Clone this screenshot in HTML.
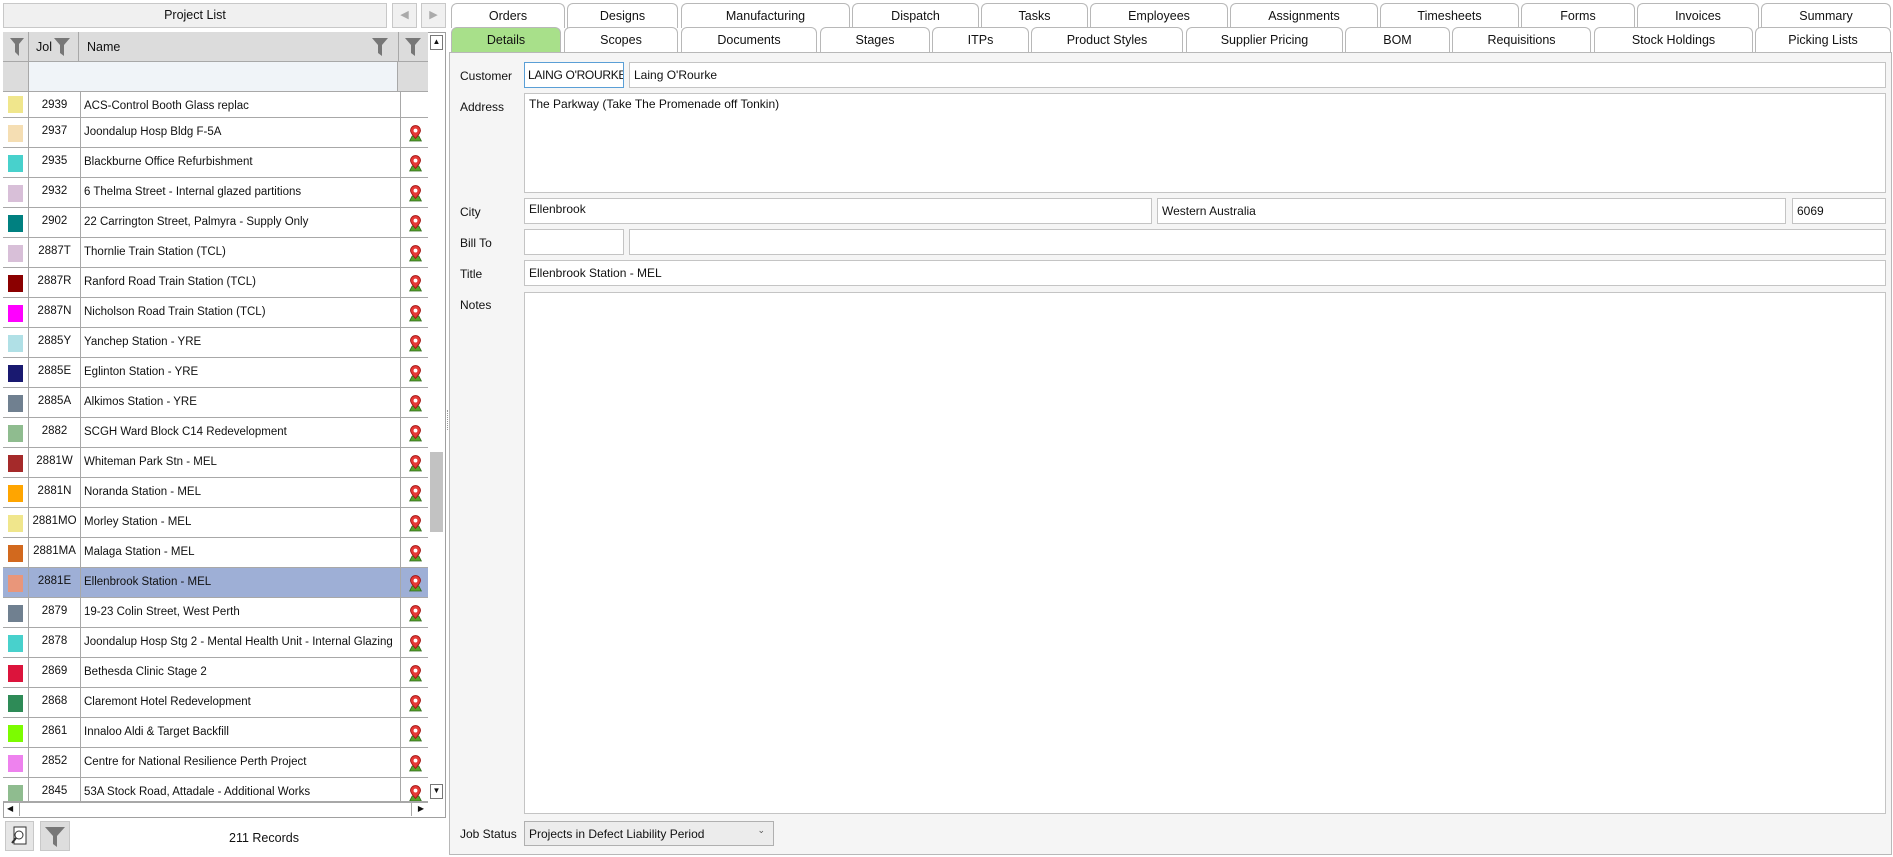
<!DOCTYPE html><html><head><meta charset="utf-8"><style>
*{box-sizing:border-box;margin:0;padding:0}
body{width:1893px;height:857px;background:#fff;font-family:"Liberation Sans",sans-serif;font-size:12px;color:#111;position:relative;overflow:hidden}
.a{position:absolute}
.btn{background:#f0f0f0;border:1px solid #c8c8c8}
.tab{position:absolute;height:25px;border:1px solid #b8b8b8;border-bottom:none;border-radius:6px 6px 0 0;background:#fff;text-align:center;line-height:24px;font-size:12.5px}
.fld{position:absolute;background:#fff;border:1px solid #c4c4c4;padding:3px 4px;font-size:12px}
.lbl{position:absolute;left:460px;font-size:12px}
.row{position:absolute;left:3px;width:425px;height:30px;border-bottom:1px solid #a8a8a8;background:#fff;font-size:11.5px}
.row .sw{position:absolute;left:5px;top:7px;width:15px;height:17px}
.row .j{position:absolute;left:25px;width:53px;top:0;height:29px;line-height:27px;text-align:center;border-left:1px solid #a8a8a8;border-right:1px solid #a8a8a8;overflow:hidden;white-space:nowrap}
.row .n{position:absolute;left:78px;width:320px;top:0;height:29px;line-height:29px;padding-left:3px;border-right:1px solid #a8a8a8;overflow:hidden;white-space:nowrap}
.row svg{position:absolute;left:405px;top:7px}
.sel{background:#9eafd6}
</style></head><body>
<div class="a btn" style="left:3px;top:3px;width:384px;height:25px;text-align:center;line-height:23px;font-size:12.5px">Project List</div>
<div class="a btn" style="left:392px;top:3px;width:25px;height:25px;color:#aaa;text-align:center;line-height:23px;font-size:11px">◀</div>
<div class="a btn" style="left:421px;top:3px;width:25px;height:25px;color:#aaa;text-align:center;line-height:23px;font-size:11px">▶</div>
<div class="a" style="left:3px;top:32px;width:443px;height:786px;border:1px solid #a0a0a0;background:#fff"></div>
<div class="a" style="left:3px;top:32px;width:425px;height:30px;background:#dcdcdc;border-bottom:1px solid #a8a8a8"></div>
<div class="a" style="left:3px;top:62px;width:425px;height:30px;background:#dcdcdc;border-bottom:1px solid #a8a8a8"></div>
<div class="a" style="left:28px;top:62px;width:370px;height:29px;background:#f0f4f8;border-left:1px solid #a8a8a8;border-right:1px solid #a8a8a8"></div>
<div class="a" style="left:28px;top:32px;width:1px;height:30px;background:#a8a8a8"></div>
<div class="a" style="left:78px;top:32px;width:1px;height:30px;background:#a8a8a8"></div>
<div class="a" style="left:398px;top:32px;width:1px;height:30px;background:#a8a8a8"></div>
<div class="a" style="left:36px;top:40px;font-size:12.5px">Jol</div>
<div class="a" style="left:87px;top:40px;font-size:12.5px">Name</div>
<svg class="a" style="left:10px;top:38px" width="14" height="18"><path d="M0 0H14L9 6V18L5 14V6Z" fill="#777"/></svg>
<svg class="a" style="left:54px;top:38px" width="16" height="18"><path d="M0 0H16L10 7V18L6 15V7Z" fill="#777"/></svg>
<svg class="a" style="left:372px;top:38px" width="16" height="18"><path d="M0 0H16L10 7V18L6 15V7Z" fill="#777"/></svg>
<svg class="a" style="left:405px;top:38px" width="16" height="18"><path d="M0 0H16L10 7V18L6 15V7Z" fill="#777"/></svg>
<div id="rows"></div>
<div class="a" style="left:428px;top:33px;width:17px;height:769px;background:#fff"></div>
<div class="a" style="left:430px;top:35px;width:13px;height:15px;border:1px solid #777;font-size:8px;text-align:center;line-height:12px">▲</div>
<div class="a" style="left:430px;top:452px;width:13px;height:80px;background:#c2c2c2"></div>
<div class="a" style="left:430px;top:784px;width:13px;height:15px;border:1px solid #777;font-size:8px;text-align:center;line-height:12px">▼</div>
<div class="a" style="left:4px;top:802px;width:424px;height:14px;background:#fff;border-top:1px solid #a8a8a8"></div>
<div class="a" style="left:7px;top:802px;width:13px;height:14px;border-right:1px solid #a8a8a8;font-size:8px;line-height:14px">◀</div>
<div class="a" style="left:411px;top:802px;width:13px;height:14px;border-left:1px solid #a8a8a8;font-size:8px;line-height:14px;text-align:right">▶</div>
<div class="a btn" style="left:5px;top:821px;width:29px;height:30px;background:#e6e6e6"><svg width="27" height="28"><rect x="8" y="5" width="12" height="17" fill="#fff" stroke="#333"/><circle cx="13" cy="13" r="4" fill="none" stroke="#333"/><path d="M10 16L6 21" stroke="#333" stroke-width="2"/></svg></div>
<div class="a btn" style="left:40px;top:821px;width:30px;height:30px;background:#ddd"><svg width="28" height="28"><path d="M4 5H24L16 14V25L12 22V14Z" fill="#777"/></svg></div>
<div class="a" style="left:229px;top:831px;font-size:12.5px">211 Records</div>
<div class="a" style="left:447px;top:410px;width:2px;height:20px;border-left:1px dotted #999"></div>
<div id="tabs"></div>
<div class="a" style="left:449px;top:52px;width:1443px;height:803px;border:1px solid #b8b8b8;background:#f5f5f5"></div>
<div class="lbl" style="top:69px">Customer</div>
<div class="fld" style="left:524px;top:62px;width:100px;height:26px;border-color:#5a9fd6;font-size:12px;white-space:nowrap;overflow:hidden;padding-top:5px;padding-left:3px;letter-spacing:-0.3px">LAING O'ROURKE</div>
<div class="fld" style="left:629px;top:62px;width:1257px;height:26px;padding-top:5px">Laing O'Rourke</div>
<div class="lbl" style="top:100px">Address</div>
<div class="fld" style="left:524px;top:93px;width:1362px;height:100px">The Parkway (Take The Promenade off Tonkin)</div>
<div class="lbl" style="top:205px">City</div>
<div class="fld" style="left:524px;top:198px;width:628px;height:26px">Ellenbrook</div>
<div class="fld" style="left:1157px;top:198px;width:629px;height:26px;padding-top:5px">Western Australia</div>
<div class="fld" style="left:1792px;top:198px;width:94px;height:26px;padding-top:5px">6069</div>
<div class="lbl" style="top:236px">Bill To</div>
<div class="fld" style="left:524px;top:229px;width:100px;height:26px"></div>
<div class="fld" style="left:629px;top:229px;width:1257px;height:26px"></div>
<div class="lbl" style="top:267px">Title</div>
<div class="fld" style="left:524px;top:260px;width:1362px;height:26px;padding-top:5px">Ellenbrook Station - MEL</div>
<div class="lbl" style="top:298px">Notes</div>
<div class="fld" style="left:524px;top:292px;width:1362px;height:522px"></div>
<div class="lbl" style="top:827px">Job Status</div>
<div class="fld" style="left:524px;top:821px;width:250px;height:25px;background:#ececec;border-color:#b0b0b0;padding-top:5px">Projects in Defect Liability Period<span style="position:absolute;right:8px;top:3px;font-size:9px;color:#555">⌄</span></div>
<script>
const rows=[["#f0e68c","2939","ACS-Control Booth Glass replac",0],["#f5deb3","2937","Joondalup Hosp  Bldg F-5A",1],["#48d1cc","2935","Blackburne Office Refurbishment",1],["#d8bfd8","2932","6 Thelma Street - Internal glazed partitions",1],["#008080","2902","22 Carrington Street, Palmyra - Supply Only",1],["#d8bfd8","2887T","Thornlie Train Station (TCL)",1],["#8b0000","2887R","Ranford Road Train Station (TCL)",1],["#ff00ff","2887N","Nicholson Road Train Station (TCL)",1],["#b0e0e6","2885Y","Yanchep Station - YRE",1],["#191970","2885E","Eglinton Station - YRE",1],["#708090","2885A","Alkimos Station - YRE",1],["#8fbc8f","2882","SCGH Ward Block C14 Redevelopment",1],["#a52a2a","2881W","Whiteman Park Stn - MEL",1],["#ffa500","2881N","Noranda Station - MEL",1],["#f0e68c","2881MO","Morley Station - MEL",1],["#d2691e","2881MA","Malaga Station - MEL",1],["#e9967a","2881E","Ellenbrook Station - MEL",1],["#708090","2879","19-23 Colin Street, West Perth",1],["#48d1cc","2878","Joondalup Hosp Stg 2 - Mental Health Unit - Internal Glazing",1],["#dc143c","2869","Bethesda Clinic Stage 2",1],["#2e8b57","2868","Claremont Hotel Redevelopment",1],["#7cfc00","2861","Innaloo Aldi & Target Backfill",1],["#ee82ee","2852","Centre for National Resilience Perth Project",1],["#8fbc8f","2845","53A Stock Road, Attadale - Additional Works",1]];
const pin='<svg width="15" height="17" viewBox="0 0 18 20"><path d="M2 19L5 13H13L16 19Z" fill="#5aa02c" stroke="#2d6a1a" stroke-width="1"/><path d="M9 16C9 16 3 9 3 6.5A6 6 0 0 1 15 6.5C15 9 9 16 9 16Z" fill="#e53935" stroke="#a01010"/><circle cx="9" cy="6.5" r="2.3" fill="#fff"/></svg>';
let h='';rows.forEach((r,i)=>{const top=i==0?92:118+(i-1)*30;const hh=i==0?26:30;h+=`<div class="row${i==16?' sel':''}" style="top:${top}px;height:${Math.min(hh,802-top)}px;overflow:hidden"><div class="sw" style="background:${r[0]};${i==0?'top:4px':''}"></div><div class="j">${r[1]}</div><div class="n">${r[2]}</div>${r[3]?pin:''}</div>`;});
document.getElementById('rows').innerHTML=h;
const t1=[["Orders",451,565],["Designs",567,678],["Manufacturing",681,850],["Dispatch",852,979],["Tasks",981,1088],["Employees",1090,1228],["Assignments",1230,1378],["Timesheets",1380,1519],["Forms",1521,1635],["Invoices",1637,1759],["Summary",1761,1891]];
const t2=[["Details",451,561],["Scopes",564,678],["Documents",681,817],["Stages",820,930],["ITPs",932,1029],["Product Styles",1031,1183],["Supplier Pricing",1186,1343],["BOM",1345,1450],["Requisitions",1452,1591],["Stock Holdings",1594,1753],["Picking Lists",1755,1891]];
let s='';t1.forEach(t=>s+=`<div class="tab" style="left:${t[1]}px;top:3px;width:${t[2]-t[1]}px">${t[0]}</div>`);
t2.forEach((t,i)=>s+=`<div class="tab" style="left:${t[1]}px;top:27px;width:${t[2]-t[1]}px;${i==0?'background:#a8e08a;':''}">${t[0]}</div>`);
document.getElementById('tabs').innerHTML=s;
</script>
</body></html>
